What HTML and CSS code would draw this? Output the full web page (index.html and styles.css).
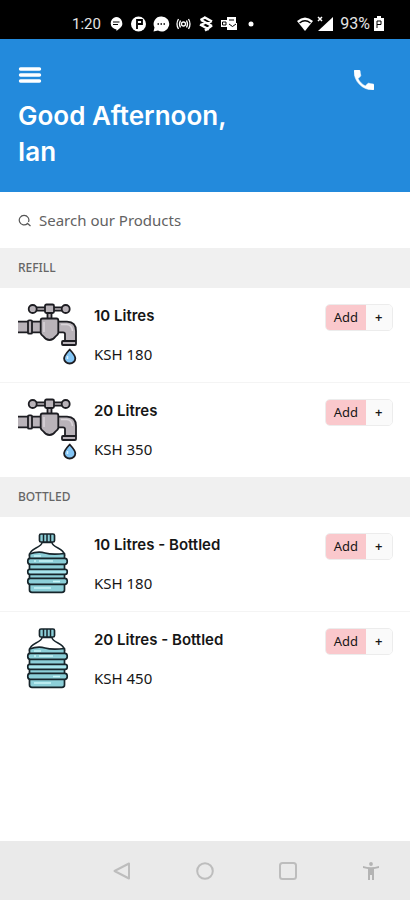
FILE: index.html
```
<!DOCTYPE html>
<html lang="en">
<head>
<meta charset="utf-8">
<meta name="viewport" content="width=device-width, initial-scale=1">
<title>Products</title>
<link rel="stylesheet" href="styles.css">
</head>
<body>
<svg class="defs" aria-hidden="true">
  <symbol id="tap" viewBox="0 1 60 68">
    <g fill="#b9b3b9" stroke="#1d1d22" stroke-width="1.8" stroke-linejoin="round">
      <path d="M16 8.3H49V11.7H16Z"/>
      <circle cx="15.7" cy="10" r="4"/>
      <circle cx="48.7" cy="10" r="4"/>
      <path d="M30.5 13H34.5V20H30.5Z"/>
      <rect x="28" y="5.5" width="9" height="8.5" rx="1.5"/>
      <path d="M1 22.7H24V33.3H1"/>
      <path d="M41 22.7H50Q59 23 59 32V42H48V35Q48 33.3 46 33.3H41Z"/>
      <rect x="11" y="21.3" width="4" height="13.4" rx="1"/>
      <path d="M25.5 19.5H39.5Q41.3 19.5 41.3 21.5V34Q41 36 38.5 37.5Q36 41 32.5 41Q29 41 26.5 37.5Q24 36 23.7 34V21.5Q23.7 19.5 25.5 19.5Z"/>
      <rect x="45" y="42" width="14" height="4" rx="1"/>
      <path fill="#83c5f5" d="M52.700 50.500Q58.300 56.500 58.300 59.500A5.600 5 0 0 1 47.100 59.500Q47.100 56.500 52.700 50.500Z"/>
    </g>
    <path fill="none" stroke="#dad5da" stroke-width="1.5" d="M27 23V33M44 25.500H50Q55 26 55.500 32"/>
    <path fill="none" stroke="#d7f0ff" stroke-width="1.5" d="M50.500 57V60"/>
  </symbol>
  <symbol id="bottle" viewBox="0 -1 60 68">
    <path fill="#fff" stroke="#17252b" stroke-width="1.5" d="M25 12.500Q25 15 19 18Q13 21 12.500 25H47.500Q47 21 41 18Q35 15 35 12.500Z"/>
    <g fill="#8ccfd8" stroke="#17252b" stroke-width="1.7" stroke-linejoin="round">
      <rect x="22.500" y="4" width="15" height="8" rx="1.5"/>
      <path d="M12.500 24Q21 21 28 23T47.500 23.500V60Q47.500 62.300 45 62.300H15Q12.500 62.300 12.500 60Z"/>
      <rect x="10.800" y="28.300" width="39.400" height="6" rx="2.500"/>
      <rect fill="#a7e5ed" x="10.800" y="39.300" width="39.400" height="5" rx="2"/>
      <rect x="10.800" y="48.300" width="39.400" height="6" rx="2.500"/>
    </g>
    <path stroke="#17252b" stroke-width="1.5" d="M26.500 4V12M30 4V12M33.500 4V12"/>
    <path fill="none" stroke="#c8f5f8" stroke-width="1.5" d="M17 26H24M17 31H19M22 31H36M36 51.500H43M17 58H34"/>
  </symbol>
</svg>

<div class="app">
  <div class="status">
    <span class="clock">1:20</span>
    <svg class="notices" viewBox="0 0 146 18" aria-hidden="true">
      <path fill="#fff" d="M6 2A6.300 6.300 0 0 1 9.500 13.500L6.500 16V14.500A6.300 6.300 0 0 1 6 2Z"/>
      <path stroke="#000" d="M3 7H9.500M3 9.500H8"/>
      <circle cx="28.500" cy="9" r="7.500" fill="#fff"/>
      <path fill="none" stroke="#000" stroke-width="1.800" d="M27 14V5H32V9H28"/>
      <path fill="#fff" d="M51.500 1.500A7.500 7.500 0 1 1 48 15.500L43.500 16.500L44.500 12.500A7.500 7.500 0 0 1 51.500 1.500Z"/>
      <path fill="none" stroke="#000" stroke-width="1.500" stroke-dasharray="1.500 1.500" d="M47.500 9H55.500"/>
      <g fill="none" stroke="#fff" stroke-width="1.300">
        <circle cx="73.500" cy="9" r="2"/>
        <path d="M70.500 5.500Q68.500 9 70.500 12.500M76.500 5.500Q78.500 9 76.500 12.500M68.500 4Q65.500 9 68.500 14M78.500 4Q81.500 9 78.500 14"/>
      </g>
      <path fill="none" stroke="#fff" stroke-width="2.400" d="M94 2L102 6.500M91 5L102 11M90 9.500L99 14.500M95 2.500L90.500 5M102 6L97 8.500M95 8L90.500 10M102 10.500L95 15.500"/>
      <path fill="#fff" d="M117 2H126V8H127V15H117V12H111V5H117Z"/>
      <path fill="none" stroke="#000" d="M119 5H124M112.500 10V7H116V10ZM119 9L122.500 11.500L126 9"/>
      <circle cx="141" cy="9" r="2.500" fill="#fff"/>
    </svg>
    <svg class="signals" viewBox="0 0 38 18" aria-hidden="true">
      <path fill="#fff" d="M1 6Q9 -1 17 6L9 16Z"/>
      <path fill="none" stroke="#000" stroke-width="1.300" d="M3.500 8Q9 3.500 14.500 8"/>
      <path fill="#fff" d="M37 2V16H22Z"/>
      <path stroke="#fff" stroke-width="1.500" d="M22 2L26 6M26 2L22 6"/>
    </svg>
    <span class="charge">93%</span>
    <svg class="battery" viewBox="0 0 12 18" aria-hidden="true">
      <path fill="#fff" d="M1 3H4V1H8V3H11V16H1Z"/>
      <path fill="none" stroke="#000" d="M4 13V6H8V9.500H4"/>
    </svg>
  </div>

  <header class="hero">
    <div class="hero-bar">
      <button class="plain" type="button" aria-label="Menu">
        <svg class="menu-icon" viewBox="0 0 24 18"><path stroke="#fff" stroke-width="3.400" stroke-linecap="round" d="M2.500 3H21.500M2.500 9H21.500M2.500 15H21.500"/></svg>
      </button>
      <a class="call" href="tel:" aria-label="Call">
        <svg class="call-icon" viewBox="3 3 18 18"><path fill="#fff" stroke="#fff" stroke-width=".5" d="M6.620 10.790c1.440 2.830 3.760 5.140 6.590 6.590l2.200-2.200c.27-.27.67-.36 1.020-.24 1.120.37 2.330.57 3.570.57.55 0 1 .45 1 1V20c0 .55-.45 1-1 1-9.390 0-17-7.610-17-17 0-.55.45-1 1-1h3.500c.55 0 1 .45 1 1 0 1.250.2 2.450.57 3.570.11.35.03.74-.25 1.020l-2.200 2.200z"/></svg>
      </a>
    </div>
    <h1>Good Afternoon,<br>Ian</h1>
  </header>

  <label class="search">
    <svg class="search-icon" viewBox="0 0 13 13" aria-hidden="true"><path fill="none" stroke="#555" stroke-width="1.200" d="M9.500 9.500A4.800 4.800 0 1 1 10.500 8M9 9L12.500 12"/></svg>
    <input type="search" placeholder="Search our Products" aria-label="Search our Products">
  </label>

  <main>
    <section>
      <h2>REFILL</h2>
      <ul>
        <li class="product">
          <svg class="thumb" aria-hidden="true"><use href="#tap"/></svg>
          <div class="info"><h3>10 Litres</h3><p>KSH 180</p></div>
          <div class="stepper"><button class="add" type="button">Add</button><button class="plus" type="button">+</button></div>
        </li>
        <li class="product">
          <svg class="thumb" aria-hidden="true"><use href="#tap"/></svg>
          <div class="info"><h3>20 Litres</h3><p>KSH 350</p></div>
          <div class="stepper"><button class="add" type="button">Add</button><button class="plus" type="button">+</button></div>
        </li>
      </ul>
    </section>
    <section>
      <h2>BOTTLED</h2>
      <ul>
        <li class="product">
          <svg class="thumb" aria-hidden="true"><use href="#bottle"/></svg>
          <div class="info"><h3>10 Litres - Bottled</h3><p>KSH 180</p></div>
          <div class="stepper"><button class="add" type="button">Add</button><button class="plus" type="button">+</button></div>
        </li>
        <li class="product">
          <svg class="thumb" aria-hidden="true"><use href="#bottle"/></svg>
          <div class="info"><h3>20 Litres - Bottled</h3><p>KSH 450</p></div>
          <div class="stepper"><button class="add" type="button">Add</button><button class="plus" type="button">+</button></div>
        </li>
      </ul>
    </section>
  </main>

  <nav class="system">
    <button class="plain" type="button" aria-label="Back"><svg viewBox="0 0 20 20"><path d="M17 2.500V17.500L2.500 10Z"/></svg></button>
    <button class="plain" type="button" aria-label="Home"><svg viewBox="0 0 20 20"><circle cx="10" cy="10" r="7.800"/></svg></button>
    <button class="plain" type="button" aria-label="Recent"><svg viewBox="0 0 20 20"><rect x="2" y="2" width="16" height="16" rx="2.500"/></svg></button>
    <button class="plain" type="button" aria-label="Accessibility"><svg class="solid" viewBox="0 0 20 20"><circle cx="10" cy="3" r="1.900"/><path d="M2 5Q10 7.500 18 5V7L13 8V19H11V14H9V19H7V8L2 7Z"/></svg></button>
  </nav>
</div>
</body>
</html>
```
FILE: styles.css
```
* {
  box-sizing: border-box;
}

body {
  margin: 0;
  background: #fff;
  color: #161616;
  font-family: "Noto Sans", sans-serif;
}

h1, h2, h3, p, ul {
  margin: 0;
  padding: 0;
}

ul {
  list-style: none;
}

svg {
  display: block;
}

button, input {
  font: inherit;
  color: inherit;
}

.defs {
  display: none;
}

.plain {
  display: block;
  padding: 0;
  border: 0;
  background: none;
}

.app {
  display: flex;
  flex-direction: column;
  min-height: 100vh;
}

.status {
  display: flex;
  align-items: center;
  padding: 8px 25px 0 72px;
  height: 39px;
  background: #000;
  color: #e4e4e4;
  font: 16px/24px Roboto, sans-serif;
}

.clock {
  font-size: 15px;
}

.notices {
  width: 146px;
  height: 18px;
  margin-left: 9px;
}

.signals {
  width: 38px;
  height: 18px;
  margin-left: auto;
}

.charge {
  margin: 0 3px 0 6px;
}

.battery {
  width: 12px;
  height: 18px;
}

.hero {
  padding: 24px 36px 22px 18px;
  background: #238adc;
  color: #fff;
}

.hero-bar {
  display: flex;
  justify-content: space-between;
  align-items: flex-start;
  height: 35px;
}

.menu-icon {
  width: 24px;
  height: 24px;
}

.call {
  padding-top: 7px;
}

.call-icon {
  width: 20px;
  height: 20px;
}

h1 {
  font: 600 26px/36px Inter, sans-serif;
}

.search {
  display: flex;
  align-items: center;
  gap: 8px;
  height: 56px;
  padding: 0 18px;
}

.search-icon {
  width: 13px;
  height: 13px;
}

.search input {
  flex: 1;
  min-width: 0;
  padding: 0;
  border: 0;
  outline: 0;
  background: none;
  font-size: 15px;
}

.search input::placeholder {
  color: #626262;
  opacity: 1;
}

h2 {
  padding: 0 18px;
  background: #f0f0f0;
  color: #666;
  font: 500 12px/40px "Noto Sans", sans-serif;
}

.product {
  display: flex;
  align-items: flex-start;
  padding: 12px 17px 14px;
  border-bottom: 1px solid #f4f4f4;
}

.product:last-child {
  border-bottom: 0;
}

.thumb {
  width: 60px;
  height: 68px;
}

.info {
  flex: 1;
  margin-left: 17px;
}

h3 {
  padding-top: 4px;
  font: 600 15px/24px Inter, sans-serif;
}

.info p {
  margin-top: 14px;
  font-size: 15px;
  line-height: 24px;
}

.stepper {
  display: flex;
  width: 68px;
  height: 27px;
  margin-top: 4px;
  overflow: hidden;
  border: 1px solid #ececec;
  border-radius: 5px;
}

.stepper button {
  padding: 0;
  border: 0;
  font-size: 13px;
  line-height: 25px;
}

.stepper .add {
  flex: 3;
  background: #fac8cc;
}

.stepper .plus {
  flex: 2;
  background: #fafafa;
  font-weight: 600;
}

.system {
  display: flex;
  justify-content: space-between;
  align-items: center;
  height: 59px;
  margin-top: auto;
  padding: 0 29px 0 112px;
  background: #eaeaea;
}

.system svg {
  width: 20px;
  height: 20px;
  fill: none;
  stroke: #bdbdbd;
  stroke-width: 2;
  stroke-linejoin: round;
}

.system .solid {
  fill: #b4b4b4;
  stroke: none;
}
```
